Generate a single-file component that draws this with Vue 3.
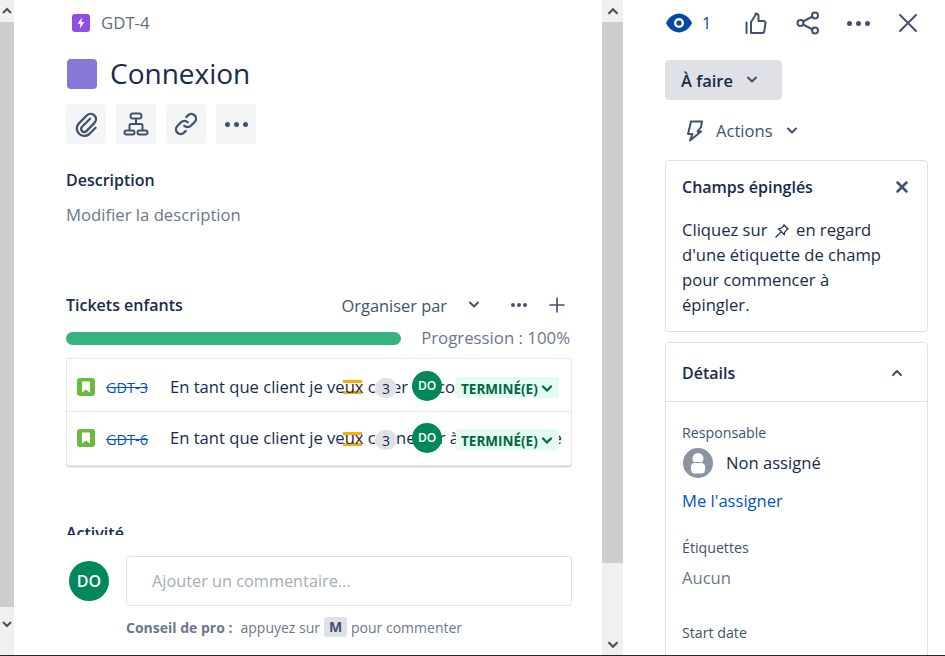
<script setup>
const actions = [
  { id: 'clip', size: 28, box: '0 0 24 24', paths: ['M15.500 7.500 8.600 14.400a2.600 2.600 0 0 0 3.700 3.700l7-7.100a4.600 4.600 0 0 0-6.500-6.500L5.600 11.800a6.400 6.400 0 0 0 9 9l5.600-5.600'] },
  { id: 'tree', size: 26, box: '0 0 26 26', paths: ['M13 8v5M6.500 19v-4.500A1.500 1.500 0 0 1 8 13h10a1.500 1.500 0 0 1 1.500 1.500V19', 'M10 2.500h6a1.500 1.500 0 0 1 0 5h-6a1.500 1.500 0 0 1 0-5ZM3.500 19.500h6a2 2 0 0 1 0 4h-6a2 2 0 0 1 0-4ZM16.500 19.500h6a2 2 0 0 1 0 4h-6a2 2 0 0 1 0-4Z'] },
  { id: 'link', size: 28, box: '0 0 24 24', paths: ['M10.500 13.500a4 4 0 0 0 5.700 0l3.200-3.200a4 4 0 0 0-5.700-5.700l-1.400 1.400', 'M13.500 10.500a4 4 0 0 0-5.700 0l-3.200 3.200a4 4 0 0 0 5.700 5.700l1.400-1.400'] },
  { id: 'more', dots: true }
]
const tickets = [
  { key: 'GDT-3', title: 'En tant que client je veux créer un compte' },
  { key: 'GDT-6', title: 'En tant que client je veux connecter à mon compte' }
]
</script>

<template>
  <div class="page">
    <div class="scrollbar narrow">
      <div class="arrow"><svg width="12" height="8" viewBox="0 0 12 8"><path d="M2 6l4-4 4 4" /></svg></div>
      <div class="thumb thumb-left"></div>
      <div class="arrow lower"><svg width="12" height="8" viewBox="0 0 12 8"><path d="M2 2l4 4 4-4" /></svg></div>
    </div>

    <main class="main">
      <div class="scroll-area">
        <div class="crumb">
          <span class="epic-icon"><svg width="10" height="12" viewBox="0 0 10 12"><path d="M6 0.500 1.500 6.800H4.500L3.800 11.500 8.500 5H5.400Z" fill="#fff" /></svg></span>
          <span class="crumb-key">GDT-4</span>
        </div>
        <div class="title-row">
          <span class="title-square"></span>
          <h1>Connexion</h1>
        </div>
        <div class="action-row">
          <button v-for="a in actions" :key="a.id" class="action">
            <svg v-if="!a.dots" :width="a.size" :height="a.size" :viewBox="a.box" class="stroke-icon"><path v-for="p in a.paths" :key="p" :d="p" /></svg>
            <span v-else class="dots"><i></i><i></i><i></i></span>
          </button>
        </div>
        <h2 class="h-desc">Description</h2>
        <div class="desc">Modifier la description</div>

        <div class="tickets-head">
          <h2>Tickets enfants</h2>
          <span class="organise">Organiser par</span>
          <svg class="stroke-icon chev-org" width="14" height="10" viewBox="0 0 14 10"><path d="M3 2.500l4 4 4-4" /></svg>
          <span class="dots small"><i></i><i></i><i></i></span>
          <svg class="stroke-icon plus" width="16" height="16" viewBox="0 0 16 16"><path d="M8 1v14M1 8h14" /></svg>
        </div>
        <div class="progress-row">
          <div class="bar"></div>
          <span class="progress-text">Progression : 100%</span>
        </div>
        <div class="card">
          <div v-for="t in tickets" :key="t.key" class="ticket">
            <span class="story"><svg width="10" height="12" viewBox="0 0 10 12"><path d="M1 0.500h8v11L5 8.500l-4 3Z" fill="#fff" /></svg></span>
            <a class="key">{{ t.key }}</a>
            <span class="t-title">{{ t.title }}</span>
            <span class="priority"><i></i><i></i></span>
            <span class="count">3</span>
            <span class="mini-avatar">DO</span>
            <span class="lozenge">TERMINÉ(E)<svg class="loz-chev" width="12" height="8" viewBox="0 0 12 8"><path d="M2 1.500l4 4 4-4" /></svg></span>
          </div>
        </div>
        <h2 class="h-act">Activité</h2>
      </div>
      <div class="comment">
        <span class="avatar">DO</span>
        <div class="input">Ajouter un commentaire...</div>
      </div>
      <div class="tip"><b>Conseil de pro :</b><span>appuyez sur</span><kbd>M</kbd><span>pour commenter</span></div>
    </main>

    <div class="scrollbar wide">
      <div class="arrow"><svg width="14" height="9" viewBox="0 0 12 8"><path d="M2 6l4-4 4 4" /></svg></div>
      <div class="thumb thumb-mid"></div>
      <div class="arrow end"><svg width="14" height="9" viewBox="0 0 12 8"><path d="M2 2l4 4 4-4" /></svg></div>
    </div>

    <aside class="side">
      <div class="top-icons">
        <svg class="eye" width="26" height="20" viewBox="0 0 26 20"><path d="M0 10C3 4 8 .5 13 .5S23 4 26 10c-3 6-8 9.500-13 9.500S3 16 0 10Z" fill="#0747A6" /><circle cx="13" cy="10" r="5" fill="#fff" /><circle cx="13" cy="10" r="2.600" fill="#0747A6" /></svg>
        <span class="watch">1</span>
        <svg class="stroke-icon thumbup" width="22" height="22" viewBox="0 0 22 22"><path d="M1.500 10.500V21M6 21V10l4.500-7V1.500a3 3 0 0 1 3 3V9h5a2 2 0 0 1 2 2.300l-1.200 7.700a2 2 0 0 1-2 2Z" /></svg>
        <svg class="stroke-icon share" width="24" height="24" viewBox="0 0 24 24"><circle cx="4.500" cy="12" r="3" /><circle cx="19" cy="4.500" r="3" /><circle cx="19" cy="19.500" r="3" /><path d="M7 10.500l9.500-5M7 13.500l9.500 5" /></svg>
        <span class="dots top"><i></i><i></i><i></i></span>
        <svg class="stroke-icon close" width="20" height="20" viewBox="0 0 20 20"><path d="M2 2l16 16M18 2 2 18" /></svg>
      </div>
      <button class="status">À faire<svg class="stroke-icon dark" width="14" height="10" viewBox="0 0 14 10"><path d="M3 2.500l4 4 4-4" /></svg></button>
      <div class="actions-row">
        <svg class="stroke-icon bolt" width="18" height="22" viewBox="0 0 18 22"><path d="M5 1.500h11l-1 5.500-3.500 4.500H15L4 20.500l2.500-6.500H2Z" /></svg>
        <span>Actions</span>
        <svg class="stroke-icon" width="14" height="10" viewBox="0 0 14 10"><path d="M3 2.500l4 4 4-4" /></svg>
      </div>
      <section class="panel pinned">
        <div class="pin-head">
          <h3>Champs épinglés</h3>
          <svg class="stroke-icon thick" width="12" height="12" viewBox="0 0 12 12"><path d="M1.500 1.500l9 9M10.500 1.500l-9 9" /></svg>
        </div>
        <p>Cliquez sur
          <svg class="pin" width="16" height="16" viewBox="0 0 16 16"><path d="M9.500 1.500 14.500 6.500M10.500 2.500 6.800 5.300 4.500 5.800 10.200 11.500 10.700 9.200 13.500 5.500M7.300 8.700 1.500 14.500" /></svg>
          en regard d'une étiquette de champ pour commencer à épingler.</p>
      </section>
      <section class="panel details">
        <div class="det-head">
          <h3>Détails</h3>
          <svg class="stroke-icon" width="14" height="10" viewBox="0 0 14 10"><path d="M3 7l4-4 4 4" /></svg>
        </div>
        <div class="det-body">
          <div class="label l-resp">Responsable</div>
          <div class="assignee">
            <svg width="30" height="30" viewBox="0 0 30 30"><circle cx="15" cy="15" r="15" fill="#8993A4" /><circle cx="15" cy="10.500" r="5.500" fill="#fff" /><rect x="7.500" y="14.500" width="15" height="11.500" rx="4" fill="#fff" stroke="#8993A4" /></svg>
            <span class="assignee-name">Non assigné</span>
          </div>
          <a class="assign">Me l'assigner</a>
          <div class="label l-tags">Étiquettes</div>
          <div class="none">Aucun</div>
          <div class="label l-start">Start date</div>
        </div>
      </section>
    </aside>
    <div class="baseline"></div>
  </div>
</template>

<style>
html, body { margin: 0; background: #fff; }
</style>

<style scoped>
.page { position: relative; display: flex; width: 945px; height: 656px; overflow: hidden; background: #fff; color: #172B4D; font-family: "Open Sans", "Noto Sans", sans-serif; font-size: 16.6px; }
h1, h2, h3, p { margin: 0; }
.scrollbar { display: flex; flex-direction: column; flex: none; background: #f0f0f0; }
.scrollbar.narrow { width: 14px; }
.scrollbar.wide { width: 21px; }
.arrow { display: flex; align-items: center; justify-content: center; height: 22px; flex: none; }
.arrow path { fill: none; stroke: #505050; stroke-width: 2; }
.arrow.end { margin-top: auto; height: 24px; }
.arrow.lower { height: 34px; }
.thumb { background: #cdcdcd; }
.thumb-left { height: 585px; }
.thumb-mid { height: 541px; }
.main { width: 588px; flex: none; box-sizing: border-box; padding: 0 30px 0 52px; display: flex; flex-direction: column; }
.scroll-area { height: 535px; overflow: hidden; flex: none; }
.crumb { display: flex; align-items: center; gap: 11px; height: 18px; margin: 14px 0 0 6px; color: #5E6C84; font-size: 16.800px; }
.crumb-key { margin-top: -2px; }
.epic-icon { width: 18px; height: 18px; border-radius: 3px; background: #904EE2; display: flex; align-items: center; justify-content: center; }
.title-row { display: flex; align-items: center; gap: 13px; height: 30px; margin: 27px 0 0 1px; }
.title-square { width: 30px; height: 30px; border-radius: 4px; background: #8777D9; flex: none; }
h1 { font-size: 28px; font-weight: 400; line-height: 30px; color: #172B4D; margin-top: -2px; }
.action-row { display: flex; gap: 10px; margin-top: 15px; }
.action { width: 40px; height: 40px; padding: 0; border: 0; border-radius: 4px; background: #F4F5F7; display: flex; align-items: center; justify-content: center; }
.stroke-icon { flex: none; }
.stroke-icon path, .stroke-icon circle { fill: none; stroke: #42526E; stroke-width: 2; stroke-linecap: round; stroke-linejoin: round; }
.dots { display: inline-flex; gap: 4px; }
.dots i { width: 5px; height: 5px; border-radius: 50%; background: #42526E; }
.dots.small { gap: 2px; margin-left: 30px; }
.dots.small i { width: 4px; height: 4px; }
h2 { font-size: 16px; font-weight: 600; line-height: 22px; }
.h-desc { margin-top: 25px; }
.desc { margin-top: 13px; line-height: 22px; color: #6B778C; font-size: 16.700px; }
.tickets-head { display: flex; align-items: center; height: 22px; margin-top: 68px; }
.organise { margin-left: auto; color: #42526E; font-size: 16.400px; }
.chev-org { margin-left: 20px; }
.plus { margin-left: 22px; margin-right: 7px; }
.plus path { stroke-width: 1.600; }
.progress-row { display: flex; align-items: center; justify-content: space-between; height: 22px; margin-top: 11px; padding-right: 2px; color: #6B778C; font-size: 16.800px; }
.progress-text { margin-top: -2px; }
.bar { width: 335px; height: 13px; border-radius: 7px; background: #36B37E; }
.card { margin-top: 9px; height: 108px; box-sizing: border-box; padding-top: 1px; border: 1px solid #E6E8EC; border-radius: 3px; box-shadow: 0 1px 2px rgba(9, 30, 66, .25); background: #fff; }
.ticket { position: relative; height: 51px; box-sizing: border-box; padding: 1px 0 0 10px; display: flex; align-items: center; white-space: nowrap; overflow: hidden; }
.ticket + .ticket { border-top: 1px solid #EBECF0; }
.story { width: 18px; height: 18px; margin-top: 1px; border-radius: 3px; background: #6BBA3F; display: flex; align-items: center; justify-content: center; flex: none; }
.key { margin-left: 11px; width: 64px; flex: none; padding-top: 3px; font-size: 14.500px; color: #0052CC; text-decoration: line-through; }
.t-title { position: relative; z-index: 1; color: #172B4D; }
.priority { position: absolute; z-index: 0; left: 276px; top: 20px; width: 19px; height: 13px; }
.priority i { display: block; height: 3px; margin-bottom: 8px; background: #FFAB00; }
.count { position: absolute; z-index: 2; left: 308px; top: 18px; width: 22px; height: 20px; border-radius: 10px; background: #DFE1E6; font-size: 14px; line-height: 22px; text-align: center; }
.mini-avatar { position: absolute; z-index: 2; left: 345px; top: 11px; width: 30px; height: 30px; border-radius: 50%; background: #00875A; color: #fff; font-size: 12px; font-weight: 600; line-height: 30px; text-align: center; }
.lozenge { position: absolute; z-index: 2; left: 389px; top: 17px; width: 103px; height: 21px; padding: 2px 0 0 5px; box-sizing: border-box; border-radius: 3px; background: #E3FCEF; color: #006644; font-size: 13.500px; font-weight: 700; display: flex; align-items: center; gap: 3px; }
.loz-chev path { fill: none; stroke: #006644; stroke-width: 2.200; stroke-linecap: round; }
.h-act { margin-top: 56px; }
.comment { display: flex; gap: 17px; margin: 21px 0 0 3px; }
.avatar { width: 40px; height: 40px; margin-top: 5px; border-radius: 50%; background: #00875A; color: #fff; font-size: 16px; font-weight: 600; line-height: 40px; text-align: center; flex: none; }
.input { width: 446px; height: 50px; box-sizing: border-box; padding-left: 25px; border: 1px solid #DFE1E6; border-radius: 3px; line-height: 48px; color: #A5ADBA; font-size: 16.300px; flex: none; }
.tip { display: flex; align-items: center; height: 22px; margin: 10px 0 0 60px; color: #6B778C; font-size: 14px; white-space: nowrap; }
.tip b { font-weight: 700; margin-right: 8px; }
.tip kbd { width: 23px; height: 20px; margin: 0 4px; border-radius: 3px; background: #DFE1E6; color: #42526E; font: 700 14px/20px "Open Sans", sans-serif; text-align: center; }
.side { width: 322px; flex: none; box-sizing: border-box; padding: 0 17px 0 42px; display: flex; flex-direction: column; }
.top-icons { display: flex; align-items: center; height: 22px; margin-top: 12px; flex: none; }
.eye { margin-left: 1px; }
.watch { margin-left: 10px; color: #0747A6; font-size: 16px; }
.thumbup { margin-left: 34px; }
.share { margin-left: 29px; }
.dots.top { margin-left: 27px; }
.close { margin-left: 28px; }
.status { width: 117px; height: 40px; flex: none; margin-top: 26px; padding: 0 0 0 16px; border: 0; border-radius: 4px; background: #DFE1E6; color: #172B4D; font: 600 16.500px "Open Sans", sans-serif; display: flex; align-items: center; gap: 12px; }
.actions-row { display: flex; align-items: center; height: 22px; flex: none; margin: 20px 0 0 21px; color: #42526E; }
.actions-row span { margin: -2px 12px 0 12px; }
.panel { border: 1px solid #DFE1E6; border-radius: 4px; width: 263px; box-sizing: border-box; flex: none; }
.pinned { height: 172px; margin-top: 18px; padding: 15px 16px 0; }
.pin-head { display: flex; align-items: center; justify-content: space-between; padding-right: 3px; height: 22px; }
.thick path { stroke-width: 2.500; }
h3 { font-size: 16px; font-weight: 600; line-height: 22px; }
.pinned p { margin-top: 19px; width: 212px; line-height: 25px; }
.pin { vertical-align: -3px; margin: 0 2px; }
.pin path { fill: none; stroke: #172B4D; stroke-width: 1.200; }
.details { height: 400px; margin-top: 10px; }
.det-head { display: flex; align-items: center; justify-content: space-between; height: 59px; box-sizing: border-box; padding: 2px 23px 0 16px; border-bottom: 1px solid #DFE1E6; }
.det-body { padding: 0 16px; }
.label { font-size: 14.200px; line-height: 20px; color: #42526E; }
.l-resp { margin-top: 21px; }
.assignee { display: flex; align-items: center; gap: 13px; height: 30px; margin: 5px 0 0 1px; }
.assignee-name { margin-top: -2px; }
.assign { display: block; margin-top: 12px; line-height: 22px; color: #0052CC; }
.l-tags { margin-top: 26px; }
.none { margin-top: 9px; line-height: 22px; color: #6B778C; }
.l-start { margin-top: 34px; }
.baseline { position: absolute; left: 0; right: 0; bottom: 0; height: 1px; background: #1d2b36; }
</style>
